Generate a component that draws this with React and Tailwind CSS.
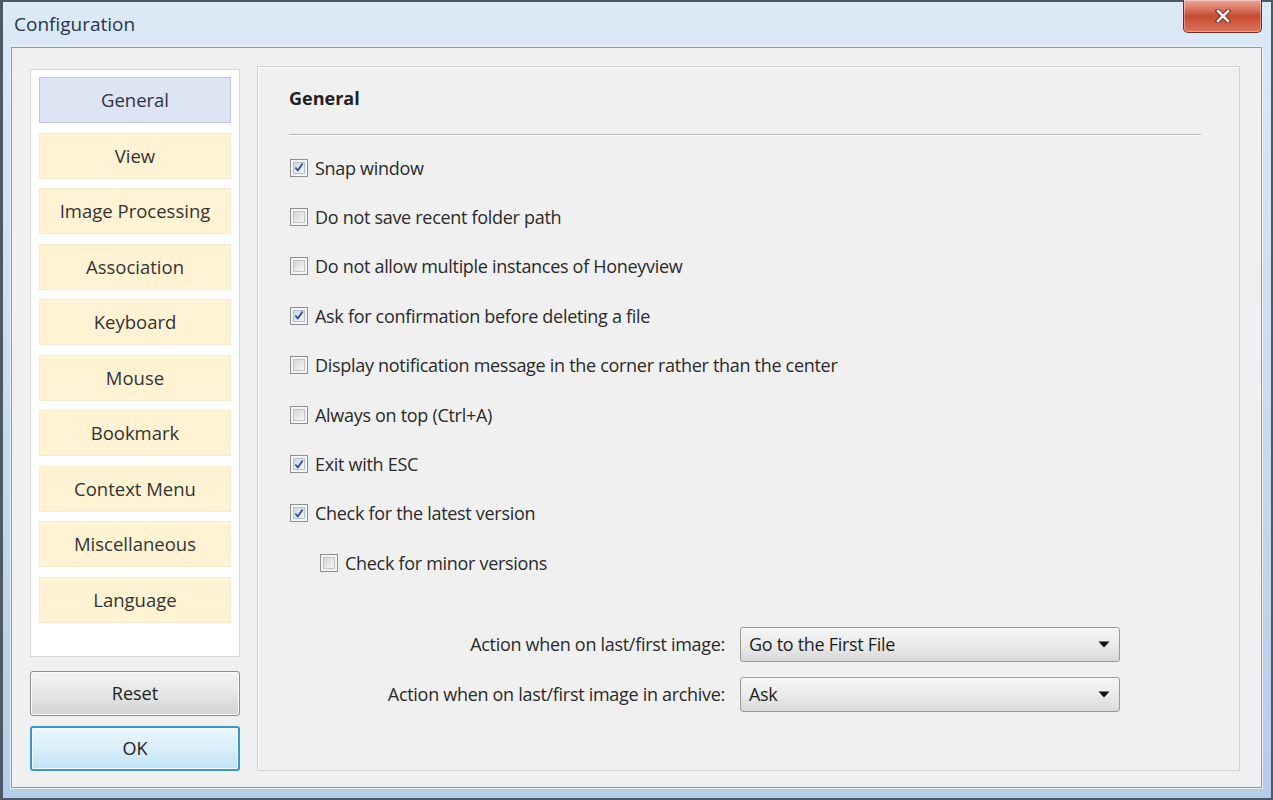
import React from 'react';

const FONT = "font-['Open_Sans','Noto_Sans',sans-serif]";

const categories = [
  'General',
  'View',
  'Image Processing',
  'Association',
  'Keyboard',
  'Mouse',
  'Bookmark',
  'Context Menu',
  'Miscellaneous',
  'Language',
];

const options = [
  { label: 'Snap window', checked: true },
  { label: 'Do not save recent folder path', checked: false },
  { label: 'Do not allow multiple instances of Honeyview', checked: false },
  { label: 'Ask for confirmation before deleting a file', checked: true },
  { label: 'Display notification message in the corner rather than the center', checked: false },
  { label: 'Always on top (Ctrl+A)', checked: false },
  { label: 'Exit with ESC', checked: true },
  { label: 'Check for the latest version', checked: true },
  { label: 'Check for minor versions', checked: false, indent: true },
];

const Checkbox = ({ checked }) => (
  <div className="w-[18px] h-[18px] shrink-0 border border-[#8e8f8f] bg-[#f4f4f4] p-[2px]">
    <div
      className={`w-full h-full border flex items-center justify-center ${
        checked
          ? 'border-[#b4bfd2] bg-gradient-to-br from-[#cfd7e6] to-[#f1f4f9]'
          : 'border-[#c4c4c4] bg-gradient-to-br from-[#d6d6d6] to-[#f6f6f6]'
      }`}
    >
      {checked && (
        <svg width="11" height="11" viewBox="0 0 11 11">
          <path d="M1.5 5.5 L4.2 8.8 L9.5 1.2" fill="none" stroke="#2d4c85" strokeWidth="1.9" strokeLinejoin="round" />
        </svg>
      )}
    </div>
  </div>
);

const Combo = ({ value }) => (
  <div className="w-[380px] h-[35px] rounded-[3px] border border-[#9a9a9a] bg-gradient-to-b from-[#f5f5f5] via-[#ebebeb] to-[#d9d9d9] flex items-center justify-between pl-[8px] pr-[9px] shadow-[inset_0_1px_0_#ffffff]">
    <span className="text-[18px] tracking-[-0.3px] text-[#1e1e1e]">{value}</span>
    <svg width="12" height="7" viewBox="0 0 12 7">
      <path d="M0.5 0.5 H11.5 L6 6.5 Z" fill="#111" />
    </svg>
  </div>
);

export default function App() {
  return (
    <div className={`${FONT} w-[1273px] h-[800px] flex flex-col bg-gradient-to-b from-[#dce9f7] via-[#c9dcf1] to-[#b4cde9] border-l-[3px] border-t-[2px] border-r-[2px] border-b-[2px] border-[#4f5966] pl-[8px] pr-[9px] pb-[10px]`}>
      {/* Title bar */}
      <div className="h-[45px] flex items-start justify-between shrink-0">
        <div className="pt-[10px] pl-[3px] text-[19px] text-[#27364a] leading-[24px]">Configuration</div>
        <div className="-mt-[2px] w-[79px] h-[33px] rounded-b-[5px] border border-t-0 border-[#6e2c22] bg-gradient-to-b from-[#e9a899] via-[#c84a33] to-[#d9735a] flex items-center justify-center shadow-[inset_0_0_0_1px_rgba(255,255,255,0.35)]">
          <svg width="16" height="14" viewBox="0 0 16 14">
            <path d="M3 2 L13 12 M13 2 L3 12" stroke="#6a2a20" strokeWidth="4.5" strokeLinecap="square" />
            <path d="M3 2 L13 12 M13 2 L3 12" stroke="#f4f0ee" strokeWidth="2.6" strokeLinecap="square" />
          </svg>
        </div>
      </div>

      {/* Client area */}
      <div className="flex-1 border border-[#8d9aab] bg-[#f0f0f0] flex pt-[20px] pl-[18px] shadow-[0_0_0_1px_#e8f0f8]">
        {/* Left column */}
        <div className="w-[210px] flex flex-col">
          <div className="mt-[1px] h-[588px] bg-white border border-[#d6d6d6] pt-[7px] px-[8px] flex flex-col gap-[9.5px]">
            {categories.map((c, i) => (
              <div
                key={c}
                className={`h-[46px] shrink-0 flex items-center justify-center text-[18.5px] border ${
                  i === 0
                    ? 'bg-[#dde4f4] border-[#bcc7de] text-[#2c3340]'
                    : 'bg-[#fff3d4] border-[#f6ead0] text-[#333333]'
                }`}
              >
                {c}
              </div>
            ))}
          </div>
          <div className="mt-[14px] h-[45px] rounded-[3px] border border-[#8c8c8c] bg-gradient-to-b from-[#f3f3f3] via-[#e6e6e6] to-[#d2d2d2] flex items-center justify-center text-[18px] text-[#222] shadow-[inset_0_0_0_1px_#fbfbfb]">
            Reset
          </div>
          <div className="mt-[10px] h-[45px] rounded-[3px] border-2 border-[#3a95d0] bg-gradient-to-b from-[#eaf6fd] via-[#d9effa] to-[#bfe3f6] flex items-center justify-center text-[18px] text-[#222] shadow-[inset_0_0_0_1px_#f4fbff]">
            OK
          </div>
        </div>

        {/* Right panel */}
        <div className="ml-[17px] -mt-[2px] w-[983px] h-[705px] border border-[#d3d3d3] shadow-[inset_1px_1px_0_#ffffff] flex flex-col pl-[31px] pt-[19px]">
          <div className="h-[24px] leading-[24px] text-[18px] font-bold text-[#222]">General</div>
          <div className="mt-[24px] w-[912px] h-[2px] border-t border-[#b9b9b9] border-b border-b-white bg-[#d0d0d0]" />
          <div className="mt-[7px] flex flex-col">
            {options.map((o) => (
              <div key={o.label} className={`h-[49.4px] flex items-center gap-[7px] ${o.indent ? 'pl-[31px]' : 'pl-[1px]'}`}>
                <Checkbox checked={o.checked} />
                <span className="text-[18px] tracking-[-0.3px] text-[#2a2a2a] leading-[24px]">{o.label}</span>
              </div>
            ))}
          </div>
          <div className="mt-[39px] pr-[119px] flex flex-col items-end gap-[15px]">
            <div className="flex items-center gap-[15px]">
              <span className="text-[18px] tracking-[-0.3px] text-[#2a2a2a]">Action when on last/first image:</span>
              <Combo value="Go to the First File" />
            </div>
            <div className="flex items-center gap-[15px]">
              <span className="text-[18px] tracking-[-0.3px] text-[#2a2a2a]">Action when on last/first image in archive:</span>
              <Combo value="Ask" />
            </div>
          </div>
        </div>
      </div>
    </div>
  );
}
